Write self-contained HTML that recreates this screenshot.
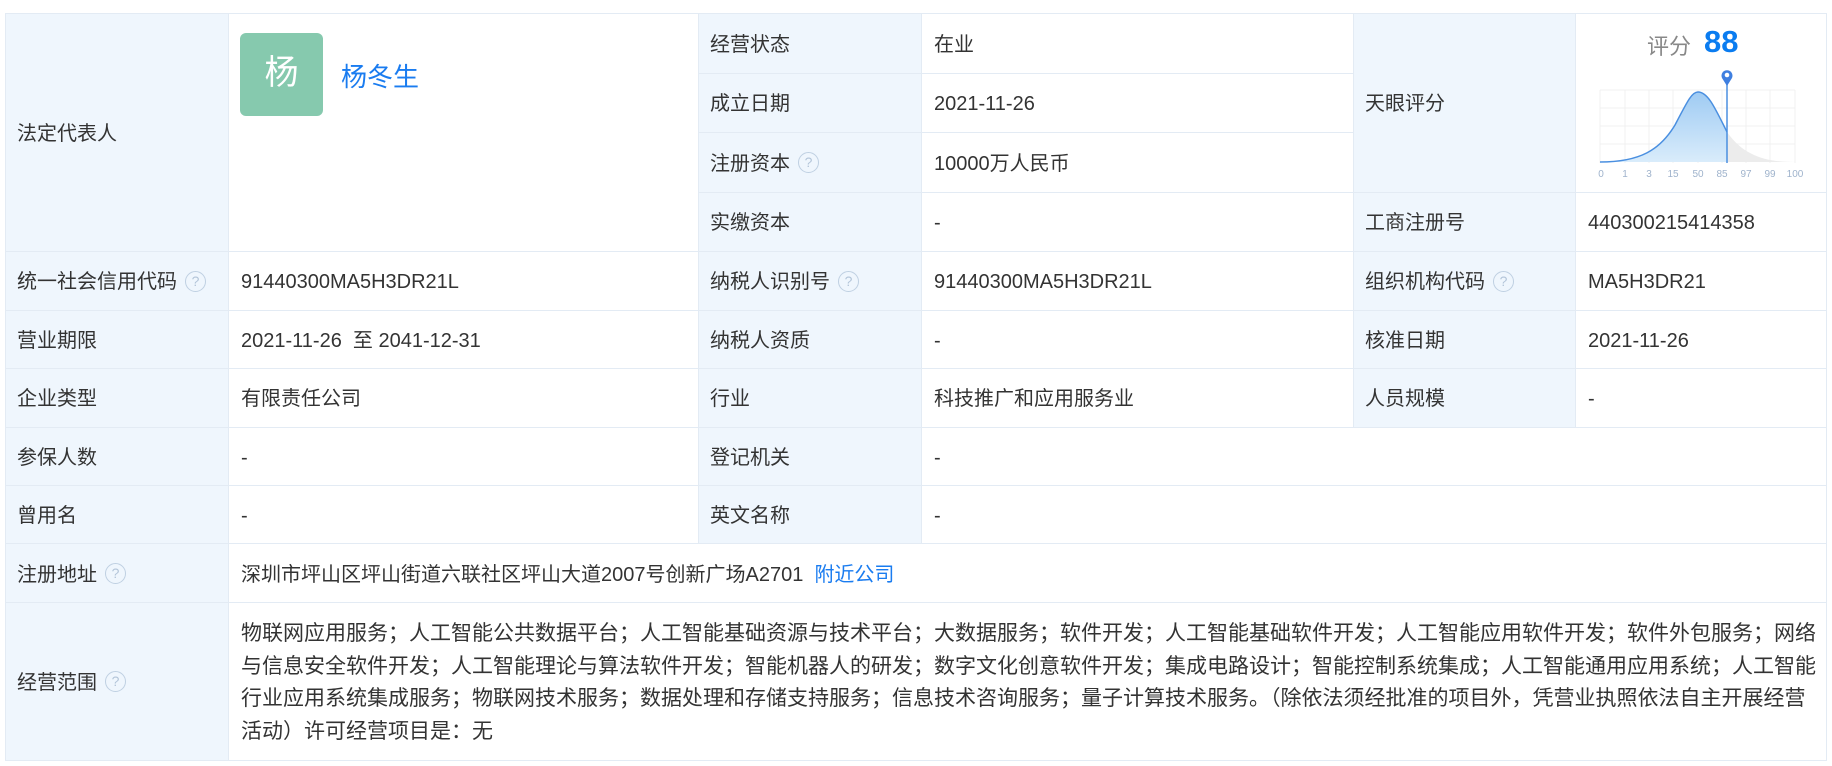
<!DOCTYPE html>
<html><head><meta charset="utf-8">
<style>
html,body{margin:0;padding:0;background:#fff;width:1832px;height:766px;overflow:hidden;}
body{font-family:"Liberation Sans","Noto Sans CJK SC",sans-serif;color:#333;font-size:20px;position:relative;}
table{position:absolute;left:5px;top:13px;border-collapse:collapse;table-layout:fixed;width:1821px;}
td{border:1px solid #e3ebf4;padding:3px 0 0 12px;vertical-align:middle;white-space:nowrap;overflow:hidden;line-height:24px;}
td.l{background:#eff6fd;padding-left:11px;}
.q{display:inline-block;width:19px;height:19px;border:1.5px solid #bfd0e2;border-radius:50%;color:#b3c5d9;font-size:14px;line-height:19px;text-align:center;vertical-align:middle;margin-left:8px;position:relative;top:-2px;}
.av{position:absolute;left:240px;top:33px;width:83px;height:83px;background:#86c9ae;border-radius:6px;color:#fff;font-size:34px;text-align:center;line-height:80px;}
.nm{position:absolute;left:341px;top:57px;color:#1a7cf0;font-size:26px;}
td.sc{line-height:32.7px;padding-top:4px;}
a{color:#1a7cf0;text-decoration:none;}
</style></head><body>
<table>
<colgroup><col style="width:223px"><col style="width:470px"><col style="width:223px"><col style="width:432px"><col style="width:222px"><col style="width:251px"></colgroup>
<tr style="height:59.5px"><td class="l" rowspan="4">法定代表人</td><td rowspan="4"></td><td class="l">经营状态</td><td>在业</td><td class="l" rowspan="3">天眼评分</td><td rowspan="3"></td></tr>
<tr style="height:59.6px"><td class="l">成立日期</td><td>2021-11-26</td></tr>
<tr style="height:59.6px"><td class="l">注册资本<span class="q">?</span></td><td>10000万人民币</td></tr>
<tr style="height:59.6px"><td class="l">实缴资本</td><td>-</td><td class="l">工商注册号</td><td>440300215414358</td></tr>
<tr style="height:58.4px"><td class="l">统一社会信用代码<span class="q">?</span></td><td>91440300MA5H3DR21L</td><td class="l">纳税人识别号<span class="q">?</span></td><td>91440300MA5H3DR21L</td><td class="l">组织机构代码<span class="q">?</span></td><td>MA5H3DR21</td></tr>
<tr style="height:58.4px"><td class="l">营业期限</td><td>2021-11-26&nbsp; 至 2041-12-31</td><td class="l">纳税人资质</td><td>-</td><td class="l">核准日期</td><td>2021-11-26</td></tr>
<tr style="height:58.5px"><td class="l">企业类型</td><td>有限责任公司</td><td class="l">行业</td><td>科技推广和应用服务业</td><td class="l">人员规模</td><td>-</td></tr>
<tr style="height:58.4px"><td class="l">参保人数</td><td>-</td><td class="l">登记机关</td><td colspan="3">-</td></tr>
<tr style="height:58.4px"><td class="l">曾用名</td><td>-</td><td class="l">英文名称</td><td colspan="3">-</td></tr>
<tr style="height:58.4px"><td class="l">注册地址<span class="q">?</span></td><td colspan="5">深圳市坪山区坪山街道六联社区坪山大道2007号创新广场A2701&nbsp; <a>附近公司</a></td></tr>
<tr style="height:158px"><td class="l">经营范围<span class="q">?</span></td><td colspan="5" class="sc" style="font-size:21px;">物联网应用服务；人工智能公共数据平台；人工智能基础资源与技术平台；大数据服务；软件开发；人工智能基础软件开发；人工智能应用软件开发；软件外包服务；网络<br>与信息安全软件开发；人工智能理论与算法软件开发；智能机器人的研发；数字文化创意软件开发；集成电路设计；智能控制系统集成；人工智能通用应用系统；人工智能<br>行业应用系统集成服务；物联网技术服务；数据处理和存储支持服务；信息技术咨询服务；量子计算技术服务。（除依法须经批准的项目外，凭营业执照依法自主开展经营<br>活动）许可经营项目是：无</td></tr>
</table>
<div class="av">杨</div>
<div class="nm">杨冬生</div>
<div style="position:absolute;left:1647px;top:29px;color:#888;font-size:22px;">评分</div>
<div style="position:absolute;left:1704px;top:24px;color:#0a7cf0;font-size:31px;font-weight:bold;">88</div>
<svg style="position:absolute;left:0;top:0" width="1832" height="766">
<defs>
<linearGradient id="g" x1="0" y1="0" x2="0" y2="1"><stop offset="0" stop-color="#9fcbf3"/><stop offset="1" stop-color="#d9ecfb"/></linearGradient>
<clipPath id="cl"><rect x="1590" y="60" width="137" height="110"/></clipPath>
<clipPath id="cr"><rect x="1727" y="60" width="80" height="110"/></clipPath>
</defs>
<g stroke="#f0f0f0" stroke-width="1">
<path d="M1600 90H1795M1600 108H1795M1600 126H1795M1600 144H1795M1625 90V163M1649 90V163M1673 90V163M1698 90V163M1722 90V163M1746 90V163M1770 90V163M1795 90V163M1600 90V163"/>
</g>
<path d="M1600,162 C1640,162 1660,150 1675,125 C1688,100 1692,92 1698,92 C1708,92 1715,108 1727,132 C1745,158 1770,162 1795,162 Z" fill="url(#g)" clip-path="url(#cl)"/>
<path d="M1600,162 C1640,162 1660,150 1675,125 C1688,100 1692,92 1698,92 C1708,92 1715,108 1727,132 C1745,158 1770,162 1795,162 Z" fill="#ececec" clip-path="url(#cr)"/>
<path d="M1600,162 C1640,162 1660,150 1675,125 C1688,100 1692,92 1698,92 C1708,92 1715,108 1727,132" fill="none" stroke="#4a8fe0" stroke-width="1.5"/>
<line x1="1727" y1="76" x2="1727" y2="163" stroke="#4a8fe0" stroke-width="1.5"/>
<path d="M1727,86 L1722,78 A5.5,5.5 0 1 1 1732,78 Z" fill="#3f7fe0"/>
<circle cx="1727" cy="75" r="2.3" fill="#fff"/>
<g fill="#9fb3cc" font-size="10" font-family="Liberation Sans" text-anchor="middle">
<text x="1601" y="177">0</text><text x="1625" y="177">1</text><text x="1649" y="177">3</text><text x="1673" y="177">15</text><text x="1698" y="177">50</text><text x="1722" y="177">85</text><text x="1746" y="177">97</text><text x="1770" y="177">99</text><text x="1795" y="177">100</text>
</g>
</svg>
</body></html>
